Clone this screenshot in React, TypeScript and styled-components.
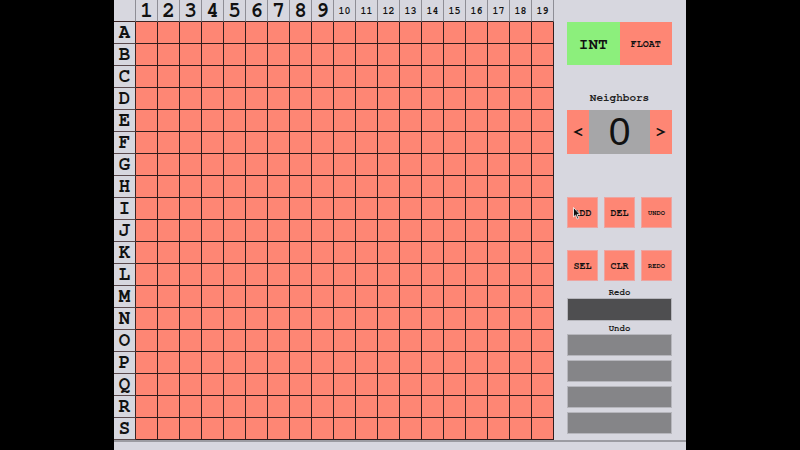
import React from "react";
import styled, { createGlobalStyle } from "styled-components";

const GlobalStyle = createGlobalStyle`
  html, body { margin: 0; padding: 0; background: #000; }
  body { font-family: "Nimbus Mono PS", "FreeMono", "Liberation Mono", "DejaVu Sans Mono", monospace; }
`;

const CELL_BG = "#fe8674";
const PANEL_BG = "#d7d7df";

const Screen = styled.div`
  width: 572px;
  height: 450px;
  margin: 0 auto;
  background: ${PANEL_BG};
  display: flex;
  flex-direction: column;
  overflow: hidden;
`;

const Main = styled.div`
  display: flex;
  height: 440px;
`;

const Board = styled.div`
  display: grid;
  grid-template-columns: repeat(20, 22px);
  grid-template-rows: repeat(20, 22px);
  width: 440px;
  height: 440px;
`;

const BaseCell = styled.div`
  box-sizing: border-box;
  display: flex;
  align-items: center;
  justify-content: center;
  border-right: 1px solid #8e8e96;
  border-bottom: 1px solid #8e8e96;
  color: #111;
  font-weight: bold;
`;

const Corner = styled(BaseCell)`
  background: ${PANEL_BG};
  border-bottom-color: #3a2424;
`;

const ColHead = styled(BaseCell)<{ $small?: boolean }>`
  background: ${PANEL_BG};
  border-bottom-color: #3a2424;
  font-size: ${(p) => (p.$small ? "10px" : "21px")};
  padding-top: ${(p) => (p.$small ? "1px" : "0")};
`;

const RowHead = styled(BaseCell)`
  background: ${PANEL_BG};
  border-right-color: #3a2424;
  border-bottom-color: #5a4a4e;
  font-size: 19px;
`;

const Cell = styled(BaseCell)`
  background: ${CELL_BG};
  border-right-color: #321c1c;
  border-bottom-color: #321c1c;
`;

const Panel = styled.div`
  width: 132px;
  box-sizing: border-box;
  padding: 22px 14px 0 13px;
  display: flex;
  flex-direction: column;
`;

const Toggle = styled.div`
  display: flex;
  flex: none;
  height: 43px;
`;

const TypeButton = styled.div<{ $active?: boolean; $size: number }>`
  flex: 1;
  display: flex;
  align-items: center;
  justify-content: center;
  background: ${(p) => (p.$active ? "#8cef7c" : CELL_BG)};
  font-size: ${(p) => p.$size}px;
  font-weight: bold;
  color: #111;
`;

const Label = styled.div<{ $size: number; $gap: number }>`
  flex: none;
  margin-top: ${(p) => p.$gap}px;
  font-size: ${(p) => p.$size}px;
  line-height: ${(p) => p.$size + 1}px;
  font-weight: bold;
  text-align: center;
  color: #222;
`;

const Stepper = styled.div`
  margin-top: 6px;
  display: grid;
  grid-template-columns: 22px 1fr 22px;
  height: 44px;
  flex: none;
`;

const Arrow = styled.div`
  background: ${CELL_BG};
  display: flex;
  align-items: center;
  justify-content: center;
  font-size: 18px;
  font-weight: bold;
  color: #111;
`;

const Count = styled.div`
  background: #a6a6a8;
  display: flex;
  align-items: center;
  justify-content: center;
  font-family: "Liberation Sans", Arial, sans-serif;
  font-size: 39px;
  color: #111;
`;

const ActionGrid = styled.div`
  flex: none;
  margin-top: 43px;
  display: grid;
  grid-template-columns: repeat(3, 31px);
  grid-auto-rows: 31px;
  column-gap: 6px;
  row-gap: 22px;
`;

const ActionButton = styled.div<{ $small?: boolean }>`
  position: relative;
  box-sizing: border-box;
  background: ${CELL_BG};
  border: 1px solid #eea4a0;
  display: flex;
  align-items: center;
  justify-content: center;
  font-size: ${(p) => (p.$small ? "7px" : "10px")};
  font-weight: bold;
  color: #111;
`;

const Cursor = styled.svg`
  position: absolute;
  left: 5px;
  top: 9px;
`;

const HistoryBar = styled.div<{ $dark?: boolean }>`
  box-sizing: border-box;
  flex: none;
  height: ${(p) => (p.$dark ? "23px" : "22px")};
  background: ${(p) => (p.$dark ? "#4e4e50" : "#858588")};
  border: 1px solid #b6b6bc;
`;

const UndoList = styled.div`
  flex: none;
  display: flex;
  flex-direction: column;
  gap: 4px;
`;

const Footer = styled.div`
  flex: 1;
  border-top: 2px solid #9c9ca2;
  background: ${PANEL_BG};
`;

const ROWS = "ABCDEFGHIJKLMNOPQRS".split("");
const COLS = Array.from({ length: 19 }, (_, i) => i + 1);

export default function App() {
  return (
    <>
      <GlobalStyle />
      <Screen>
        <Main>
          <Board>
            <Corner />
            {COLS.map((c) => (
              <ColHead key={c} $small={c >= 10}>
                {c}
              </ColHead>
            ))}
            {ROWS.map((r) => (
              <React.Fragment key={r}>
                <RowHead>{r}</RowHead>
                {COLS.map((c) => (
                  <Cell key={c} />
                ))}
              </React.Fragment>
            ))}
          </Board>
          <Panel>
            <Toggle>
              <TypeButton $active $size={16}>INT</TypeButton>
              <TypeButton $size={10}>FLOAT</TypeButton>
            </Toggle>
            <Label $size={11} $gap={27}>Neighbors</Label>
            <Stepper>
              <Arrow>&lt;</Arrow>
              <Count>0</Count>
              <Arrow>&gt;</Arrow>
            </Stepper>
            <ActionGrid>
              <ActionButton>
                ADD
                <Cursor width="8" height="13" viewBox="0 0 8 13">
                  <path d="M0.5 0.5 L0.5 10 L2.6 8 L4.2 12 L5.6 11.4 L4.1 7.6 L7 7.6 Z" fill="#111" stroke="#fff" strokeWidth="0.8" />
                </Cursor>
              </ActionButton>
              <ActionButton>DEL</ActionButton>
              <ActionButton $small>UNDO</ActionButton>
              <ActionButton>SEL</ActionButton>
              <ActionButton>CLR</ActionButton>
              <ActionButton $small>REDO</ActionButton>
            </ActionGrid>
            <Label $size={9} $gap={7}>Redo</Label>
            <HistoryBar $dark />
            <Label $size={9} $gap={3}>Undo</Label>
            <UndoList>
              <HistoryBar />
              <HistoryBar />
              <HistoryBar />
              <HistoryBar />
            </UndoList>
          </Panel>
        </Main>
        <Footer />
      </Screen>
    </>
  );
}
